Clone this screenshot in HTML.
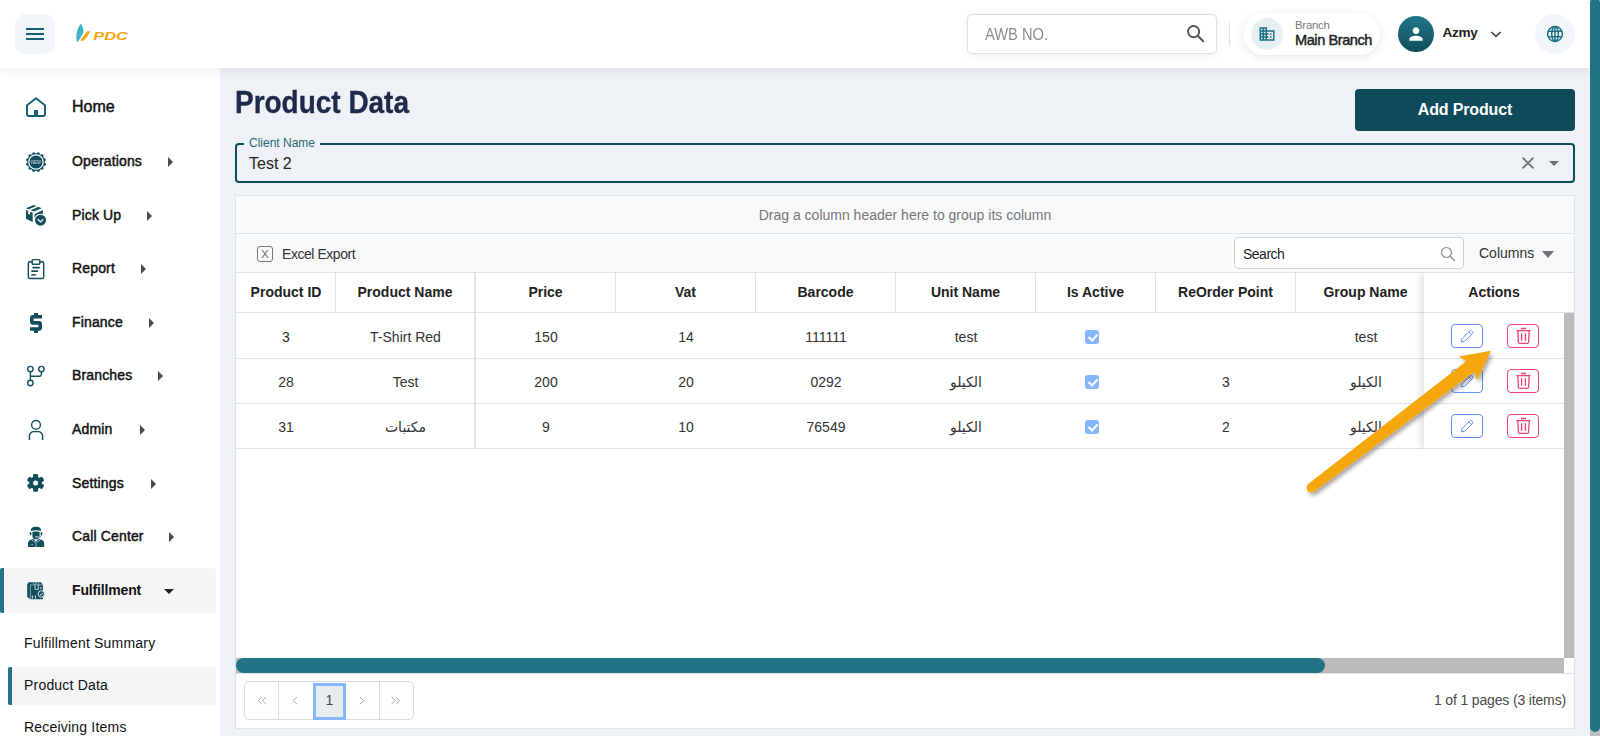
<!DOCTYPE html>
<html lang="en">
<head>
<meta charset="utf-8">
<title>Product Data</title>
<style>
*{box-sizing:border-box;margin:0;padding:0}
html,body{width:1600px;height:736px;overflow:hidden;background:#eef1f6;font-family:"Liberation Sans","DejaVu Sans",sans-serif;color:#111}
.abs{position:absolute;z-index:3}
#app{position:relative;width:1600px;height:736px;overflow:hidden}
/* header */
#hdr{position:absolute;left:0;top:0;width:1590px;height:68px;background:#fff;box-shadow:0 3px 12px rgba(0,0,0,.07);z-index:5}
#burger{position:absolute;left:15px;top:14px;width:40px;height:40px;border-radius:10px;background:#f1f6fa}
#burger i{position:absolute;left:11px;width:18px;height:2px;background:#176073}
#awb{position:absolute;left:967px;top:14px;width:250px;height:40px;border:1px solid #dedede;border-radius:5px;background:#fff;box-shadow:0 2px 8px rgba(0,0,0,.06)}
#awb span{position:absolute;left:17px;top:8.5px;font-size:16.4px;transform:scaleX(.894);transform-origin:0 0;color:#8c8c8c;line-height:20px;white-space:nowrap}
#vdiv{position:absolute;left:1229px;top:22px;width:1px;height:24px;background:#e3e3e3}
#branch{position:absolute;left:1243px;top:13px;width:137px;height:42px;border-radius:21px;background:#fff;box-shadow:0 2px 10px rgba(0,0,0,.10)}
#branch .ic{position:absolute;left:8px;top:5px;width:32px;height:32px;border-radius:50%;background:#e6f0f3}
#branch .l1{position:absolute;left:52px;top:5px;font-size:11.4px;letter-spacing:-.25px;line-height:14px;color:#7a7a7a}
#branch .l2{position:absolute;left:52px;top:18px;font-size:14.6px;line-height:18px;color:#222;-webkit-text-stroke:.45px #222;letter-spacing:-.45px;white-space:nowrap}
#avatar{position:absolute;left:1398px;top:16px;width:36px;height:36px;border-radius:50%;background:linear-gradient(#23778a,#0f4c5c)}
#uname{position:absolute;left:1442.5px;top:24px;font-size:13.6px;letter-spacing:-.3px;line-height:18px;font-weight:bold;color:#222}
#globe{position:absolute;left:1535px;top:14px;width:40px;height:40px;border-radius:50%;background:#f1f6fa}
/* page scrollbar */
#psb{position:absolute;left:1590px;top:0;width:10px;height:736px;background:#bdbdbd;z-index:9}
#psb b{position:absolute;left:0;top:-2px;width:10px;height:733.5px;background:#217385;border-radius:5px}
/* sidebar */
#side{position:absolute;left:0;top:68px;width:220px;height:668px;background:#fff}
.mi{position:absolute;left:0;width:216px;height:44px}
.mi .t{position:absolute;left:72px;top:0;line-height:44px;font-size:14px;font-weight:normal;-webkit-text-stroke:0.45px #111;letter-spacing:.15px;color:#111;white-space:nowrap}
.mi svg.ico{position:absolute;left:24px;top:10px;width:24px;height:24px}
.mi .car{position:absolute;top:18px;width:0;height:0;border-left:5.5px solid #4a4a4a;border-top:5px solid transparent;border-bottom:5px solid transparent}
.mi.act{background:#f5f5f5;border-radius:0 4px 4px 0;height:45px}
.mi.act:before{content:"";position:absolute;left:0;top:0;width:4px;height:45px;background:#217385;border-radius:2px 0 0 2px}
.si{position:absolute;left:8px;width:208px;height:38px;line-height:38px;font-size:14px;color:#111;padding-left:16px;white-space:nowrap}
.si.act{background:#f5f5f5;border-radius:0 4px 4px 0}
.si.act:before{content:"";position:absolute;left:0;top:0;width:4px;height:38px;background:#217385;border-radius:2px 0 0 2px}
/* content */
#title{position:absolute;left:235px;top:84px;transform:scaleX(.911);transform-origin:0 0;font-size:30.7px;-webkit-text-stroke:.35px #1f2a4a;line-height:38px;font-weight:bold;color:#1f2a4a;white-space:nowrap}
#addbtn{position:absolute;left:1355px;top:89px;width:220px;height:42px;border-radius:4px;background:#0f4b5a;color:#fff;font-weight:bold;font-size:16px;letter-spacing:-.15px;line-height:42px;text-align:center}
#client{position:absolute;left:235px;top:143px;width:1340px;height:40px;border:2px solid #0f4b5a;border-radius:4px}
#client .lab{position:absolute;left:7px;top:-9px;padding:0 5px;background:#eef1f6;font-size:12px;line-height:14px;color:#2a6a72}
#client .val{position:absolute;left:12px;top:8.8px;font-size:16px;line-height:20px;color:#222}
/* grid */
#grid{position:absolute;left:235px;top:195px;width:1340px;height:534px;border:1px solid #dfe3ea;background:#fff;font-size:14px;color:#333}
#gp{position:absolute;left:0;top:0;width:1338px;height:38px;background:#f8f9fb;border-bottom:1px solid #dfe3ea;text-align:center;line-height:39.5px;color:#777}
#tb{position:absolute;left:0;top:38px;width:1338px;height:39px;background:#f8f9fb;border-bottom:1px solid #dfe3ea}
.hr{position:absolute;left:0;top:77px;width:1338px;height:40px;border-bottom:1px solid #dfe3ea;background:#fff}
.row{position:absolute;left:0;width:1328px;height:45px;border-bottom:1px solid #dfe3ea;background:#fff}
.c{position:absolute;top:0;height:100%;text-align:center;white-space:nowrap}
.hr .c{line-height:39px;font-weight:bold;color:#222;border-left:1px solid #dfe3ea}
.row .c{line-height:47px;color:#333}

.mi .t.home{font-size:16px;letter-spacing:0;top:1px}
.mi.act .t{font-weight:bold;-webkit-text-stroke:0;letter-spacing:-.15px}
.si{letter-spacing:.2px}
.mi .card{position:absolute;left:164px;top:21px;width:0;height:0;border-top:5px solid #222;border-left:5.5px solid transparent;border-right:5.5px solid transparent}
.cb{position:absolute;left:49px;top:16px;width:14px;height:14px;border-radius:3px;background:#86b7fe}
.cb:after{content:"";position:absolute;left:4.5px;top:2px;width:4px;height:7px;border:solid #fff;border-width:0 2px 2px 0;transform:rotate(42deg)}
#fixL{position:absolute;left:238px;top:77px;width:2px;height:176px;background:#dfe3ea}
#act{position:absolute;left:1188px;top:77px;width:140px;height:176px;background:#fff;box-shadow:-4px 0 6px rgba(0,0,0,.10);clip-path:inset(0 0 0 -14px)}
#act .h{position:absolute;left:0;top:0;width:141px;height:40px;line-height:39px;text-align:center;font-weight:bold;color:#222;border-bottom:1px solid #dfe3ea;border-right:1px solid #dfe3ea}
#act .r{position:absolute;left:0;width:140px;border-bottom:1px solid #dfe3ea}
.be,.bd{position:absolute;top:11px;width:32px;height:24px;border-radius:4px;background:#fff}
.be{left:27px;border:1px solid #6192f4}
.bd{left:83px;border:1px solid #f0416f}
.be svg,.bd svg{position:absolute;left:0;top:0}
#vsb{position:absolute;left:1328px;top:117px;width:10px;height:345px;background:#bbb}
#hsb{position:absolute;left:0;top:462px;width:1328px;height:15px;background:#bbb}
#hsb b{position:absolute;left:0;top:0;width:1089px;height:15px;border-radius:7.5px;background:#217385}
#pager{position:absolute;left:8px;top:485px;width:170px;height:39px;border:1px solid #d9dde3;border-radius:5px;background:#fff}
#pager i{position:absolute;top:0;width:1px;height:37px;background:#d9dde3}
#pager .cur{position:absolute;left:68px;top:1px;width:33px;height:37px;border:3px solid #86b7fe;background:#e9ecef;text-align:center;line-height:29px;font-size:14px;color:#444}
#pager svg{position:absolute;left:0;top:0}
#pinfo{position:absolute;right:8px;top:495px;font-size:14px;line-height:18px;letter-spacing:-.15px;color:#4a4a4a;white-space:nowrap}
#pline{position:absolute;left:0;top:477px;width:1338px;height:1px;background:#dfe3ea}
#xl{position:absolute;left:21px;top:12px;width:16px;height:16px;border:1.5px solid #777;border-radius:3px;font-size:11px;line-height:14.5px;text-align:center;color:#666}
#xlt{position:absolute;left:46px;top:0;line-height:41px;letter-spacing:-.45px;color:#333}
#srch{position:absolute;left:998px;top:3px;width:230px;height:32px;border:1px solid #ced4da;border-radius:4px;background:#fff}
#srch span{position:absolute;left:8px;top:0;line-height:32px;letter-spacing:-.5px;color:#222}
#colsb{position:absolute;left:1243px;top:0;line-height:38px;color:#333}
#colsc{position:absolute;left:1306px;top:17px;width:0;height:0;border-top:7.5px solid #6c757d;border-left:6.3px solid transparent;border-right:6.3px solid transparent}
#r1 .c{line-height:49px}
#r1 .cb{top:17px}
</style>
</head>
<body>
<div id="app">
<div id="side">
<div class="mi" style="top:16px"><span class="t home">Home</span></div>
<div class="mi" style="top:71px"><span class="t">Operations</span><span class="car" style="left:168px"></span></div>
<div class="mi" style="top:125px"><span class="t">Pick Up</span><span class="car" style="left:147px"></span></div>
<div class="mi" style="top:178px"><span class="t">Report</span><span class="car" style="left:141px"></span></div>
<div class="mi" style="top:232px"><span class="t">Finance</span><span class="car" style="left:149px"></span></div>
<div class="mi" style="top:285px"><span class="t">Branches</span><span class="car" style="left:158px"></span></div>
<div class="mi" style="top:339px"><span class="t">Admin</span><span class="car" style="left:140px"></span></div>
<div class="mi" style="top:393px"><span class="t">Settings</span><span class="car" style="left:151px"></span></div>
<div class="mi" style="top:446px"><span class="t">Call Center</span><span class="car" style="left:169px"></span></div>
<div class="mi act" style="top:500px"><span class="t">Fulfillment</span><span class="card"></span></div>
<div class="si" style="top:556px">Fulfillment Summary</div>
<div class="si act" style="top:599px;height:38px;line-height:37px">Product Data</div>
<div class="si" style="top:640px">Receiving Items</div>
<!--ICONS-->
</div>
<svg class="abs" style="left:0;top:0;z-index:2" width="220" height="736" viewBox="0 0 220 736"><path d="M27 105.2 L36 98.3 L45 105.2 V114 a2 2 0 0 1 -2 2 H29 a2 2 0 0 1 -2 -2 Z" fill="none" stroke="#17627a" stroke-width="2" stroke-linejoin="round"/><rect x="34" y="110" width="4" height="5.5" fill="#17627a"/>
<g fill="#124e5c"><circle cx="36" cy="162" r="8.8"/><circle cx="44.16" cy="164.19" r="1.65"/><circle cx="41.98" cy="167.98" r="1.65"/><circle cx="38.19" cy="170.16" r="1.65"/><circle cx="33.81" cy="170.16" r="1.65"/><circle cx="30.02" cy="167.98" r="1.65"/><circle cx="27.84" cy="164.19" r="1.65"/><circle cx="27.84" cy="159.81" r="1.65"/><circle cx="30.02" cy="156.02" r="1.65"/><circle cx="33.81" cy="153.84" r="1.65"/><circle cx="38.19" cy="153.84" r="1.65"/><circle cx="41.98" cy="156.02" r="1.65"/><circle cx="44.16" cy="159.81" r="1.65"/></g><circle cx="36" cy="162" r="7.2" fill="none" stroke="#fff" stroke-width="1.25"/><g opacity=".88"><text x="36" y="163.9" font-family="Liberation Sans,sans-serif" font-size="5.3" fill="#fff" text-anchor="middle" textLength="9.6" lengthAdjust="spacingAndGlyphs">NEW</text></g>
<path d="M26 208.2 L33.6 204.9 L41.8 208.2 L33.8 211.5 Z" fill="#124e5c"/><path d="M36.5 206.05 L38.5 206.85 L30.7 210.2 L28.7 209.35 Z" fill="#fff"/><path d="M26 209.9 L32.7 212.8 V222 L26 218.8 Z" fill="#124e5c"/><path d="M28.1 210.8 L30.2 211.7 V214.8 L28.1 213.9 Z" fill="#fff"/><path d="M34.5 214.2 L42.8 210 V218 L34.5 222 Z" fill="#124e5c"/><circle cx="40.5" cy="220.2" r="6.5" fill="#fff"/><circle cx="40.5" cy="220.2" r="5.5" fill="#124e5c"/><path d="M37.7 219.3 L40.5 222 L43.3 219.3" fill="none" stroke="#fff" stroke-width="1.2"/>
<rect x="28.3" y="261.7" width="15.4" height="16.8" rx="1.6" fill="none" stroke="#124e5c" stroke-width="1.4"/><rect x="32.2" y="259.6" width="7.6" height="4.6" rx="0.8" fill="#fff" stroke="#124e5c" stroke-width="1.4"/><path d="M32.4 267.6 H39.8 M31.3 271.1 H38 M31.3 274.7 H35.8" stroke="#124e5c" stroke-width="1.6"/>
<path d="M42 316.8 H33 a1.2 1.2 0 0 0 -1.2 1.2 V321.7 a1.2 1.2 0 0 0 1.2 1.2 H39 a1.2 1.2 0 0 1 1.2 1.2 V327.8 a1.2 1.2 0 0 1 -1.2 1.2 H30" fill="none" stroke="#124e5c" stroke-width="3.6"/><rect x="34" y="313" width="4" height="3" fill="#124e5c"/><rect x="34" y="330" width="4" height="3" fill="#124e5c"/>
<g fill="none" stroke="#124e5c" stroke-width="1.4"><circle cx="30.4" cy="369.1" r="2.7"/><circle cx="41.4" cy="369.1" r="2.7"/><circle cx="30.4" cy="383" r="2.7"/><path d="M30.4 371.8 V380.3 M30.4 376.3 H39.2 a2.2 2.2 0 0 0 2.2 -2.2 V371.8"/></g>
<g fill="none" stroke="#124e5c" stroke-width="1.4"><circle cx="36" cy="424.9" r="4.4"/><path d="M29.4 440 V436 a4.4 4.4 0 0 1 4.4 -4.4 H38.2 a4.4 4.4 0 0 1 4.4 4.4 V440"/></g>
<g transform="translate(35.6 482.9)" fill="#124e5c"><circle r="6.3"/><rect x="-2.5" y="-8.8" width="5" height="5" rx="1.3" transform="rotate(0)"/><rect x="-2.5" y="-8.8" width="5" height="5" rx="1.3" transform="rotate(60)"/><rect x="-2.5" y="-8.8" width="5" height="5" rx="1.3" transform="rotate(120)"/><rect x="-2.5" y="-8.8" width="5" height="5" rx="1.3" transform="rotate(180)"/><rect x="-2.5" y="-8.8" width="5" height="5" rx="1.3" transform="rotate(240)"/><rect x="-2.5" y="-8.8" width="5" height="5" rx="1.3" transform="rotate(300)"/><circle r="2.5" fill="#fff"/></g>
<g fill="#124e5c"><path d="M30.9 530.9 C30.7 528.2 33 526.8 36 526.8 C39 526.8 41.3 528.2 41.1 530.9 C38 530.1 34 530.1 30.9 530.9 Z"/><path d="M32.4 531.9 C34.5 531.3 37.5 531.3 39.6 531.9 V535.4 a3.6 3.9 0 0 1 -7.2 0 Z"/><rect x="29.8" y="531.9" width="1.6" height="3.5" rx="0.8"/><rect x="40.6" y="531.9" width="1.6" height="3.5" rx="0.8"/><path d="M28 547 V543.2 C28 541 29.4 540 31.4 539.5 L33.4 538.9 L36 541.5 L38.6 538.9 L40.6 539.5 C42.6 540 44.2 541 44.2 543.2 V547 Z"/></g><path d="M41.4 535.2 C41.4 536.8 40.2 537.3 38.8 537.3" fill="none" stroke="#124e5c" stroke-width="0.6"/><path d="M35.6 537 H38.8" stroke="#fff" stroke-width="0.9" stroke-linecap="round"/><path d="M31.6 539.9 L35.3 542.3 L36 541.6 L36.7 542.3 L40.4 539.9" fill="none" stroke="#fff" stroke-width="0.55"/><path d="M36 542.4 V547" stroke="#fff" stroke-width="0.7" opacity=".75"/><rect x="31.4" y="544" width="1.4" height="0.9" fill="#fff" opacity=".8"/>
<path d="M27.2 584.6 L28.4 582.2 H40.8 L42.9 584.8 V599.3 H30.4 L27.2 597 Z" fill="#124e5c"/><path d="M30.4 599 V584.8 H42.9" fill="none" stroke="#dfe7e8" stroke-width="0.55"/><path d="M33.2 582.4 L34.6 584.6 M35.6 582.4 L36.9 584.6 M38 582.4 L39.4 584.6" stroke="#e8eeee" stroke-width="0.6"/><path d="M35 585 V589.4 H38.3 V585" fill="none" stroke="#fff" stroke-width="0.75"/><rect x="40.2" y="587.2" width="1.2" height="1.8" fill="#fff" opacity=".85"/><path d="M32.4 595.4 V598.6 M35.4 595.4 V598.6" stroke="#fff" stroke-width="0.8"/><circle cx="41.3" cy="593.9" r="3.2" fill="#124e5c" stroke="#f5f5f5" stroke-width="0.9"/><path d="M39.9 594 L41 595.1 L42.9 592.9" fill="none" stroke="#fff" stroke-width="0.8"/></svg>
<div id="hdr">
  <div id="burger"><i style="top:14px"></i><i style="top:19px"></i><i style="top:24px"></i></div>
  <svg class="abs" style="left:70px;top:18px" width="66" height="30" viewBox="70 18 66 30"><path d="M81 23.5 C77.5 28 75 35 77.2 42.5 C79.5 39.5 82.5 35 83.6 31.5 C83.2 28.5 82.3 25.5 81 23.5Z" fill="#3eb1c8"/><path d="M80 40.8 C83 37 85.5 33.5 87.2 31.2 L90.2 31.2 C88.5 35 86 39 83.2 40.8Z" fill="#f5a30a"/><text x="93.3" y="40" font-family="Liberation Sans,sans-serif" font-weight="bold" font-style="italic" font-size="11.6" fill="#f5a30a" textLength="34.5" lengthAdjust="spacingAndGlyphs">PDC</text></svg>
<svg class="abs" style="left:1185px;top:23px" width="22" height="22" viewBox="0 0 22 22"><circle cx="8.6" cy="8.6" r="5.6" fill="none" stroke="#555" stroke-width="1.9"/><path d="M12.8 12.8L18.2 18.2" stroke="#555" stroke-width="2" stroke-linecap="round"/></svg><svg class="abs" style="left:1258px;top:25px" width="18" height="18" viewBox="0 0 24 24"><path fill="#1f7082" d="M12 7V3H2v18h20V7H12zM6 19H4v-2h2v2zm0-4H4v-2h2v2zm0-4H4V9h2v2zm0-4H4V5h2v2zm4 12H8v-2h2v2zm0-4H8v-2h2v2zm0-4H8V9h2v2zm0-4H8V5h2v2zm10 12h-8v-2h2v-2h-2v-2h2v-2h-2V9h8v10zm-2-8h-2v2h2v-2zm0 4h-2v2h2v-2z"/></svg><svg class="abs" style="left:1406px;top:24px" width="20" height="20" viewBox="0 0 24 24"><path fill="#fff" d="M12 12c2.21 0 4-1.79 4-4s-1.790-4-4-4-4 1.790-4 4 1.790 4 4 4zm0 2c-2.670 0-8 1.340-8 4v2h16v-2c0-2.660-5.330-4-8-4z"/></svg><svg class="abs" style="left:1489px;top:29px" width="14" height="10" viewBox="0 0 14 10"><path d="M2.4 3 L7 7.4 L11.6 3" fill="none" stroke="#444" stroke-width="1.5"/></svg><svg class="abs" style="left:1545px;top:24px" width="20" height="20" viewBox="0 0 20 20" fill="none" stroke="#1f7082" stroke-width="1.5"><circle cx="10" cy="10" r="7.4"/><ellipse cx="10" cy="10" rx="3.3" ry="7.4"/><path d="M10 2.6V17.4M3.3 7.3H16.7M3.3 12.7H16.7"/></svg>
<div id="awb"><span>AWB NO.</span></div>
  <div id="vdiv"></div>
  <div id="branch"><div class="ic"></div><div class="l1">Branch</div><div class="l2">Main Branch</div></div>
  <div id="avatar"></div>
  <div id="uname">Azmy</div>
  <div id="globe"></div>
</div>
<div id="title">Product Data</div>
<div id="addbtn">Add Product</div>
<div id="client"><div class="lab">Client Name</div><div class="val">Test 2</div><svg class="abs" style="left:1283px;top:10px" width="50" height="16" viewBox="1520 155 50 16"><path d="M1522.6 157.6 L1533.4 168.4 M1533.4 157.6 L1522.6 168.4" stroke="#6e6e6e" stroke-width="1.6"/><path d="M1549 161 H1559 L1554 166 Z" fill="#6e6e6e"/></svg></div>
<div id="grid">
  <div id="gp">Drag a column header here to group its column</div>
  <div id="tb"><span id="xl">X</span><span id="xlt">Excel Export</span><div id="srch"><span>Search</span><svg style="position:absolute;left:204.5px;top:7.5px" width="16" height="16" viewBox="0 0 16 16"><circle cx="6.5" cy="6.5" r="5" fill="none" stroke="#8a8f96" stroke-width="1.2"/><path d="M10.2 10.2L14.5 14.5" stroke="#8a8f96" stroke-width="1.4" stroke-linecap="round"/></svg></div><span id="colsb">Columns</span><span id="colsc"></span></div>
<div class="hr">
<div class="c" style="left:0px;width:100px;border-left:0">Product ID</div>
<div class="c" style="left:99px;width:139px">Product Name</div>
<div class="c" style="left:239px;width:140px">Price</div>
<div class="c" style="left:379px;width:140px">Vat</div>
<div class="c" style="left:519px;width:140px">Barcode</div>
<div class="c" style="left:659px;width:140px">Unit Name</div>
<div class="c" style="left:799px;width:120px">Is Active</div>
<div class="c" style="left:919px;width:140px">ReOrder Point</div>
<div class="c" style="left:1059px;width:140px">Group Name</div>
</div>
<div class="row" style="top:117px;height:46px;padding-top:0" id="r1">
<div class="c" style="left:0px;width:100px">3</div>
<div class="c" style="left:100px;width:139px">T-Shirt Red</div>
<div class="c" style="left:240px;width:140px">150</div>
<div class="c" style="left:380px;width:140px">14</div>
<div class="c" style="left:520px;width:140px">111111</div>
<div class="c" style="left:660px;width:140px">test</div>
<div class="c" style="left:800px;width:120px"><span class="cb"></span></div>
<div class="c" style="left:920px;width:140px"></div>
<div class="c" style="left:1060px;width:140px">test</div>
</div>
<div class="row" style="top:163px;height:45px">
<div class="c" style="left:0px;width:100px">28</div>
<div class="c" style="left:100px;width:139px">Test</div>
<div class="c" style="left:240px;width:140px">200</div>
<div class="c" style="left:380px;width:140px">20</div>
<div class="c" style="left:520px;width:140px">0292</div>
<div class="c" style="left:660px;width:140px">الكيلو</div>
<div class="c" style="left:800px;width:120px"><span class="cb"></span></div>
<div class="c" style="left:920px;width:140px">3</div>
<div class="c" style="left:1060px;width:140px">الكيلو</div>
</div>
<div class="row" style="top:208px;height:45px">
<div class="c" style="left:0px;width:100px">31</div>
<div class="c" style="left:100px;width:139px">مكتبات</div>
<div class="c" style="left:240px;width:140px">9</div>
<div class="c" style="left:380px;width:140px">10</div>
<div class="c" style="left:520px;width:140px">76549</div>
<div class="c" style="left:660px;width:140px">الكيلو</div>
<div class="c" style="left:800px;width:120px"><span class="cb"></span></div>
<div class="c" style="left:920px;width:140px">2</div>
<div class="c" style="left:1060px;width:140px">الكيلو</div>
</div>
<div id="fixL"></div>
<div id="act"><div class="h">Actions</div>
<div class="r" style="top:40px;height:46px"><div class="be" style="top:11px"><svg width="30" height="22" viewBox="0 0 30 22"><path d="M9.3 16.9 L10 13.6 L17.9 5.7 a1.1 1.1 0 0 1 1.6 0 L20.6 6.8 a1.1 1.1 0 0 1 0 1.6 L12.7 16.3 Z M16.8 6.8 L19.5 9.5" fill="none" stroke="#6192f4" stroke-width="1" stroke-linejoin="round"/></svg></div><div class="bd" style="top:11px"><svg width="30" height="22" viewBox="0 0 30 22"><path d="M8.5 5.7 H22.5 M13 3.5 H18 M9.8 5.7 L10.4 17.2 a1.2 1.2 0 0 0 1.2 1.1 H19.4 a1.2 1.2 0 0 0 1.2 -1.1 L21.2 5.7 M13.6 8.2 V15.7 M17.4 8.2 V15.7" fill="none" stroke="#f0416f" stroke-width="1.3"/></svg></div></div>
<div class="r" style="top:86px;height:45px"><div class="be" style="top:10px"><svg width="30" height="22" viewBox="0 0 30 22"><path d="M9.3 16.9 L10 13.6 L17.9 5.7 a1.1 1.1 0 0 1 1.6 0 L20.6 6.8 a1.1 1.1 0 0 1 0 1.6 L12.7 16.3 Z M16.8 6.8 L19.5 9.5" fill="none" stroke="#6192f4" stroke-width="1" stroke-linejoin="round"/></svg></div><div class="bd" style="top:10px"><svg width="30" height="22" viewBox="0 0 30 22"><path d="M8.5 5.7 H22.5 M13 3.5 H18 M9.8 5.7 L10.4 17.2 a1.2 1.2 0 0 0 1.2 1.1 H19.4 a1.2 1.2 0 0 0 1.2 -1.1 L21.2 5.7 M13.6 8.2 V15.7 M17.4 8.2 V15.7" fill="none" stroke="#f0416f" stroke-width="1.3"/></svg></div></div>
<div class="r" style="top:131px;height:45px"><div class="be" style="top:10px"><svg width="30" height="22" viewBox="0 0 30 22"><path d="M9.3 16.9 L10 13.6 L17.9 5.7 a1.1 1.1 0 0 1 1.6 0 L20.6 6.8 a1.1 1.1 0 0 1 0 1.6 L12.7 16.3 Z M16.8 6.8 L19.5 9.5" fill="none" stroke="#6192f4" stroke-width="1" stroke-linejoin="round"/></svg></div><div class="bd" style="top:10px"><svg width="30" height="22" viewBox="0 0 30 22"><path d="M8.5 5.7 H22.5 M13 3.5 H18 M9.8 5.7 L10.4 17.2 a1.2 1.2 0 0 0 1.2 1.1 H19.4 a1.2 1.2 0 0 0 1.2 -1.1 L21.2 5.7 M13.6 8.2 V15.7 M17.4 8.2 V15.7" fill="none" stroke="#f0416f" stroke-width="1.3"/></svg></div></div>
</div>
<div id="vsb"></div><div id="hsb"><b></b></div>
<div id="pager"><svg width="170" height="37" viewBox="0 0 170 37" fill="none" stroke="#a9a9a9" stroke-width="1"><path d="M16.8 15 L13.2 18.6 L16.8 22.2 M21 15 L17.4 18.6 L21 22.2"/><path d="M52 15 L48.4 18.6 L52 22.2"/><path d="M115 15 L118.6 18.6 L115 22.2"/><path d="M146.5 15 L150.1 18.6 L146.5 22.2 M150.9 15 L154.5 18.6 L150.9 22.2"/></svg><i style="left:33px"></i><i style="left:134px"></i><div class="cur">1</div></div>
<div id="pline"></div><div id="pinfo">1 of 1 pages (3 items)</div>
</div>
<svg class="abs" style="left:1280px;top:330px;z-index:8;overflow:visible" width="240" height="190" viewBox="1280 330 240 190"><defs><filter id="ash" x="-10%" y="-10%" width="125%" height="130%"><feGaussianBlur in="SourceAlpha" stdDeviation="2"/><feOffset dx="1.5" dy="3"/><feComponentTransfer><feFuncA type="linear" slope="0.36"/></feComponentTransfer><feMerge><feMergeNode/><feMergeNode in="SourceGraphic"/></feMerge></filter></defs><path d="M1308.5 483.8 L1466.3 361.3 L1458.8 356.5 L1491.0 350.8 L1477.0 380.3 L1474.3 371.8 L1314.5 491.6 A4.9 4.9 0 0 1 1308.5 483.8 Z" fill="#f5a70d" filter="url(#ash)"/></svg>
<div id="psb"><b></b></div>
</div>
</body>
</html>
